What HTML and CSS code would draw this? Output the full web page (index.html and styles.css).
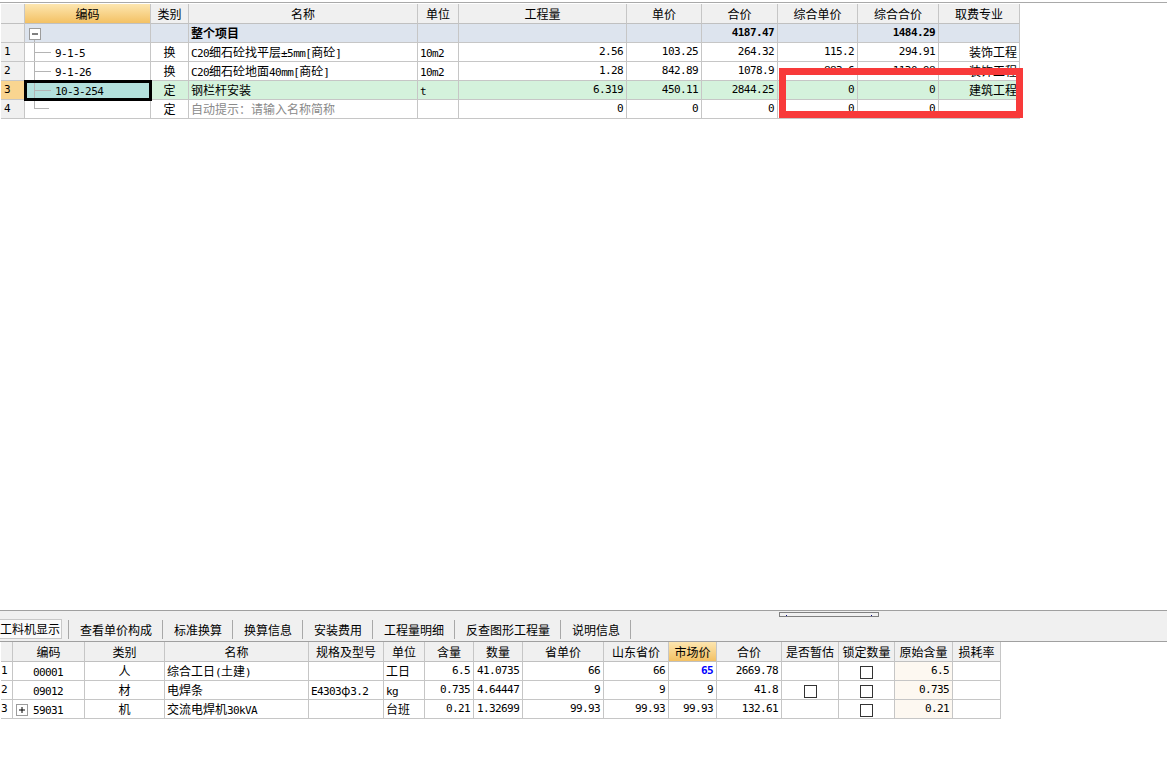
FILE: index.html
```html
<!DOCTYPE html>
<html lang="zh-CN">
<head>
<meta charset="utf-8">
<title>分部分项</title>
<link rel="stylesheet" href="styles.css">
</head>
<body>
<div class="app">
  <section class="top-pane">
    <div class="rule"></div>
    <table class="grid main">
      <colgroup>
        <col class="w24"><col class="w126"><col class="w38"><col class="w229"><col class="w41"><col class="w168"><col class="w75"><col class="w76"><col class="w80"><col class="w81"><col class="w81">
      </colgroup>
      <thead>
        <tr>
          <th class="rn"></th><th class="hot">编码</th><th>类别</th><th>名称</th><th>单位</th><th>工程量</th><th>单价</th><th>合价</th><th>综合单价</th><th>综合合价</th><th>取费专业</th>
        </tr>
      </thead>
      <tbody>
        <tr class="sum">
          <td class="rn"></td>
          <td class="code root"><span class="toggle"><svg width="12" height="12" viewBox="0 0 12 12"><rect x="0.5" y="0.5" width="11" height="11" fill="#fff" stroke="#9c9c9c"/><line x1="3" y1="6" x2="9" y2="6" stroke="#000"/></svg></span></td>
          <td></td>
          <td class="txt b">整个项目</td>
          <td></td>
          <td></td>
          <td></td>
          <td class="n b">4187.47</td>
          <td></td>
          <td class="n b">1484.29</td>
          <td></td>
        </tr>
        <tr>
          <td class="rn n">1</td>
          <td class="code"><span class="tree"></span><span class="a">9-1-5</span></td>
          <td class="c">换</td>
          <td class="txt"><span class="a">C20</span>细石砼找平层<span class="a">±5mm[</span>商砼<span class="a">]</span></td>
          <td class="txt"><span class="a">10m2</span></td>
          <td class="n">2.56</td>
          <td class="n">103.25</td>
          <td class="n">264.32</td>
          <td class="n">115.2</td>
          <td class="n">294.91</td>
          <td class="r">装饰工程</td>
        </tr>
        <tr>
          <td class="rn n">2</td>
          <td class="code"><span class="tree"></span><span class="a">9-1-26</span></td>
          <td class="c">换</td>
          <td class="txt"><span class="a">C20</span>细石砼地面<span class="a">40mm[</span>商砼<span class="a">]</span></td>
          <td class="txt"><span class="a">10m2</span></td>
          <td class="n">1.28</td>
          <td class="n">842.89</td>
          <td class="n">1078.9</td>
          <td class="n">883.6</td>
          <td class="n">1130.98</td>
          <td class="r">装饰工程</td>
        </tr>
        <tr class="cur">
          <td class="rn n">3</td>
          <td class="code sel"><span class="tree"></span><span class="a">10-3-254</span></td>
          <td class="c">定</td>
          <td class="txt">钢栏杆安装</td>
          <td class="txt"><span class="a">t</span></td>
          <td class="n">6.319</td>
          <td class="n">450.11</td>
          <td class="n">2844.25</td>
          <td class="n">0</td>
          <td class="n">0</td>
          <td class="r">建筑工程</td>
        </tr>
        <tr>
          <td class="rn n">4</td>
          <td class="code"><span class="tree last"></span></td>
          <td class="c">定</td>
          <td class="txt hint">自动提示：请输入名称简称</td>
          <td></td>
          <td class="n">0</td>
          <td class="n">0</td>
          <td class="n">0</td>
          <td class="n">0</td>
          <td class="n">0</td>
          <td></td>
        </tr>
      </tbody>
    </table>
    <div class="annot"></div>
  </section>

  <section class="bottom-pane">
    <div class="split"><span class="grip"></span></div>
    <nav class="tabs">
      <span class="tab active">工料机显示</span><i class="sep"></i>
      <span class="tab">查看单价构成</span><i class="sep"></i>
      <span class="tab">标准换算</span><i class="sep"></i>
      <span class="tab">换算信息</span><i class="sep"></i>
      <span class="tab">安装费用</span><i class="sep"></i>
      <span class="tab">工程量明细</span><i class="sep"></i>
      <span class="tab">反查图形工程量</span><i class="sep"></i>
      <span class="tab">说明信息</span><i class="sep"></i>
    </nav>
    <table class="grid sub">
      <colgroup>
        <col class="w12"><col class="w72"><col class="w80"><col class="w144"><col class="w75"><col class="w41"><col class="w49"><col class="w49"><col class="w81"><col class="w65"><col class="w48"><col class="w65"><col class="w57"><col class="w56"><col class="w58"><col class="w48">
      </colgroup>
      <thead>
        <tr>
          <th class="rn"></th><th>编码</th><th>类别</th><th>名称</th><th>规格及型号</th><th>单位</th><th>含量</th><th>数量</th><th>省单价</th><th>山东省价</th><th class="hot">市场价</th><th>合价</th><th>是否暂估</th><th>锁定数量</th><th>原始含量</th><th>损耗率</th>
        </tr>
      </thead>
      <tbody>
        <tr>
          <td class="rn2 n">1</td>
          <td class="scode"><span class="a">00001</span></td>
          <td class="c">人</td>
          <td class="txt">综合工日<span class="a">(</span>土建<span class="a">)</span></td>
          <td></td>
          <td class="txt">工日</td>
          <td class="n">6.5</td>
          <td class="n">41.0735</td>
          <td class="n">66</td>
          <td class="n">66</td>
          <td class="n b blue">65</td>
          <td class="n">2669.78</td>
          <td></td>
          <td class="c"><span class="chk"></span></td>
          <td class="n orig">6.5</td>
          <td></td>
        </tr>
        <tr>
          <td class="rn2 n">2</td>
          <td class="scode"><span class="a">09012</span></td>
          <td class="c">材</td>
          <td class="txt">电焊条</td>
          <td class="txt"><span class="a">E4303</span>φ<span class="a">3.2</span></td>
          <td class="txt"><span class="a">kg</span></td>
          <td class="n">0.735</td>
          <td class="n">4.64447</td>
          <td class="n">9</td>
          <td class="n">9</td>
          <td class="n">9</td>
          <td class="n">41.8</td>
          <td class="c"><span class="chk"></span></td>
          <td class="c"><span class="chk"></span></td>
          <td class="n orig">0.735</td>
          <td></td>
        </tr>
        <tr>
          <td class="rn2 n">3</td>
          <td class="scode plus"><span class="pbox"><svg width="12" height="12" viewBox="0 0 12 12"><rect x="0.5" y="0.5" width="11" height="11" fill="#fff" stroke="#9c9c9c"/><line x1="3" y1="6" x2="9" y2="6" stroke="#000"/><line x1="6" y1="3" x2="6" y2="9" stroke="#000"/></svg></span><span class="a">59031</span></td>
          <td class="c">机</td>
          <td class="txt">交流电焊机<span class="a">30kVA</span></td>
          <td></td>
          <td class="txt">台班</td>
          <td class="n">0.21</td>
          <td class="n">1.32699</td>
          <td class="n">99.93</td>
          <td class="n">99.93</td>
          <td class="n">99.93</td>
          <td class="n">132.61</td>
          <td></td>
          <td class="c"><span class="chk"></span></td>
          <td class="n orig">0.21</td>
          <td></td>
        </tr>
      </tbody>
    </table>
  </section>
</div>
</body>
</html>
```

FILE: styles.css
```css
* { box-sizing: border-box; }

html, body {
  margin: 0;
  padding: 0;
  background: #fff;
}

body {
  font-family: "Noto Sans CJK SC", "Noto Sans", sans-serif;
  font-size: 12px;
  color: #000;
}

.app {
  width: 1167px;
  height: 769px;
  display: flex;
  flex-direction: column;
  overflow: hidden;
}

/* ---------- top pane ---------- */
.top-pane {
  position: relative;
  flex: 0 0 611px;
  border-bottom: 1px solid #a0a0a0;
}

.rule {
  height: 1px;
  background: #a9a9a9;
  margin: 2px 0 1px;
}

/* ---------- grids ---------- */
.grid {
  border-collapse: separate;
  border-spacing: 0;
  table-layout: fixed;
  margin-left: 1px;
}

.grid th,
.grid td {
  border-right: 1px solid #c6c6c6;
  border-bottom: 1px solid #c6c6c6;
  padding: 0 3px;
  white-space: nowrap;
  overflow: hidden;
  height: 19px;
  line-height: 18px;
  font-weight: normal;
}

.grid th {
  background: #f0f0f0;
  text-align: center;
  height: 20px;
  line-height: 19px;
  border-bottom-color: #c0c0c0;
}

.grid th.hot {
  background: linear-gradient(#fde6b0, #f3c164);
}

.main { width: 1019px; }
.sub { width: 1000px; }

.w12 { width: 12px; }
.w24 { width: 24px; }
.w38 { width: 38px; }
.w41 { width: 41px; }
.w48 { width: 48px; }
.w49 { width: 49px; }
.w56 { width: 56px; }
.w57 { width: 57px; }
.w58 { width: 58px; }
.w65 { width: 65px; }
.w72 { width: 72px; }
.w75 { width: 75px; }
.w76 { width: 76px; }
.w80 { width: 80px; }
.w81 { width: 81px; }
.w126 { width: 126px; }
.w144 { width: 144px; }
.w168 { width: 168px; }
.w229 { width: 229px; }

/* cell kinds */
.grid td.n {
  font-family: "DejaVu Sans Mono", "Liberation Mono", monospace;
  font-size: 11px;
  letter-spacing: -0.6px;
  text-align: right;
}

.a {
  font-family: "DejaVu Sans Mono", "Liberation Mono", monospace;
  font-size: 11px;
  letter-spacing: -0.6px;
  line-height: 1;
}

.grid td.b { font-weight: bold; }
.grid td.c { text-align: center; }
.grid td.r { text-align: right; padding-right: 2px; }
.grid td.txt { text-align: left; padding-left: 2px; }
.grid td.hint { color: #8a8a8a; }
.grid td.blue { color: #0000ff; }

/* row number column */
.grid td.rn {
  background: #f0f0f0;
  text-align: left;
  padding-left: 3px;
}

.grid td.rn2 {
  text-align: left;
  padding: 0;
}

/* summary row */
.sum td { background: #dde4ee; }
.sum td.rn { background: #f0f0f0; }

/* current row */
.cur td { background: #d4f2dc; }
.cur td.rn { background: #f9d590; }

/* tree column */
.grid td.code {
  padding: 0;
  text-align: left;
}

.code.root {
  background:
    linear-gradient(#b4b4b4, #b4b4b4) 9px 13px / 1px 100% no-repeat,
    #dde4ee;
}

.toggle {
  display: inline-block;
  width: 12px;
  height: 12px;
  margin-left: 4px;
  vertical-align: -2px;
  line-height: 0;
}

.tree {
  display: inline-block;
  width: 30px;
  height: 18px;
  vertical-align: top;
  background:
    linear-gradient(#b4b4b4, #b4b4b4) 9px 0 / 1px 100% no-repeat,
    linear-gradient(#b4b4b4, #b4b4b4) 9px 9px / 17px 1px no-repeat;
}

.tree.last {
  background:
    linear-gradient(#b4b4b4, #b4b4b4) 9px 0 / 1px 9px no-repeat,
    linear-gradient(#b4b4b4, #b4b4b4) 9px 8px / 15px 1px no-repeat;
}

.cur td.sel {
  background: #b3e0dc;
  outline: 3px solid #000;
  outline-offset: -2px;
}

/* annotation */
.annot {
  position: absolute;
  left: 779px;
  top: 68px;
  width: 244px;
  height: 50px;
  border: 7px solid #f83a3a;
}

/* ---------- bottom pane ---------- */
.bottom-pane {
  flex: 1 1 auto;
  display: flex;
  flex-direction: column;
  background: #fff;
}

.split {
  height: 6px;
  background: #f0f0f0;
  padding: 1px 0 0 779px;
}

.grip {
  display: block;
  width: 100px;
  height: 5px;
  border: 1px solid #808080;
  background:
    linear-gradient(#101080, #101080) 6px 2px / 1px 1px no-repeat,
    linear-gradient(#101080, #101080) 91px 2px / 1px 1px no-repeat,
    #f0f0f0;
}

.tabs {
  display: flex;
  align-items: center;
  height: 25px;
  background: #f0f0f0;
  border-bottom: 1px solid #a0a0a0;
}

.tab {
  padding: 0 10px 0 11px;
  line-height: 19px;
  white-space: nowrap;
}

.tab.active {
  width: 62px;
  height: 20px;
  padding: 0;
  margin-right: 6px;
  background: #fafafa;
  border: 1px solid #c8c8c8;
  border-left: none;
  line-height: 18px;
}

.sep {
  display: block;
  width: 1px;
  height: 19px;
  background: #a8a8a8;
}

.grid td.scode {
  text-align: left;
  padding-left: 20px;
}

.grid td.scode.plus {
  padding-left: 3px;
}

.pbox {
  display: inline-block;
  width: 12px;
  height: 12px;
  margin-right: 5px;
  vertical-align: -2px;
  line-height: 0;
}

.chk {
  display: inline-block;
  width: 13px;
  height: 13px;
  border: 1px solid #333;
  background: #fff;
  vertical-align: -3px;
}

.grid td.orig { background: #fdf8f1; }
```
